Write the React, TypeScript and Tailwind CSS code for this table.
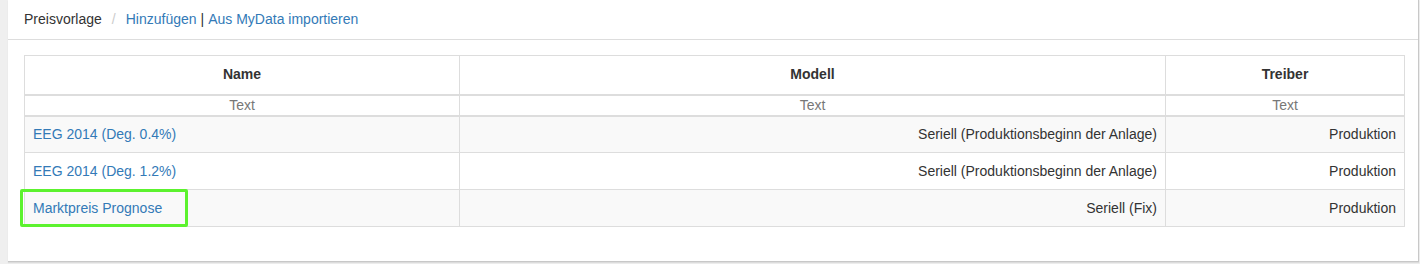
import React from "react";

const rows = [
  { name: "EEG 2014 (Deg. 0.4%)", modell: "Seriell (Produktionsbeginn der Anlage)", treiber: "Produktion" },
  { name: "EEG 2014 (Deg. 1.2%)", modell: "Seriell (Produktionsbeginn der Anlage)", treiber: "Produktion" },
  { name: "Marktpreis Prognose", modell: "Seriell (Fix)", treiber: "Produktion" },
];

export default function App() {
  return (
    <div className="w-[1420px] h-[264px] bg-[#efefef] font-['Helvetica_Neue','Liberation_Sans',Arial,sans-serif] text-[14px] text-[#333]">
      <div className="relative ml-[8px] w-[1411px] h-[262px] bg-white border-r border-b border-[#c8c8c8] shadow-[0_1px_1px_rgba(0,0,0,0.08)]">
        <div className="h-[40px] border-b border-[#ddd] pl-[16px] flex items-center">
          <span className="text-[#333]">Preisvorlage</span>
          <span className="text-[#ccc] px-[10px]">/</span>
          <a className="text-[#337ab7]">Hinzufügen</a>
          <span className="px-[4px]">|</span>
          <a className="text-[#337ab7]">Aus MyData importieren</a>
        </div>
        <div className="pt-[15px] pl-[16px] pr-[15px]">
          <table className="w-[1380px] border-collapse table-fixed">
            <colgroup>
              <col className="w-[435px]" />
              <col className="w-[706px]" />
              <col className="w-[239px]" />
            </colgroup>
            <thead>
              <tr className="h-[39px]">
                <th className="border border-[#ddd] border-b-2 font-bold text-center">Name</th>
                <th className="border border-[#ddd] border-b-2 font-bold text-center">Modell</th>
                <th className="border border-[#ddd] border-b-2 font-bold text-center">Treiber</th>
              </tr>
              <tr className="h-[21px]">
                <td className="border border-[#ddd] border-b-2 text-center text-[#777] leading-[16px]">Text</td>
                <td className="border border-[#ddd] border-b-2 text-center text-[#777] leading-[16px]">Text</td>
                <td className="border border-[#ddd] border-b-2 text-center text-[#777] leading-[16px]">Text</td>
              </tr>
            </thead>
            <tbody>
              {rows.map((r, i) => (
                <tr key={i} className={i % 2 === 0 ? "h-[37px] bg-[#f9f9f9]" : "h-[37px] bg-white"}>
                  <td className="border border-[#ddd] px-[8px] text-left">
                    <a className="text-[#337ab7]">{r.name}</a>
                  </td>
                  <td className="border border-[#ddd] px-[8px] text-right">{r.modell}</td>
                  <td className="border border-[#ddd] px-[8px] text-right">{r.treiber}</td>
                </tr>
              ))}
            </tbody>
          </table>
        </div>
        <div className="absolute left-[12px] top-[189px] w-[168px] h-[38px] border-[3px] border-[#5cf22e] rounded-[2px] pointer-events-none" />
      </div>
    </div>
  );
}
